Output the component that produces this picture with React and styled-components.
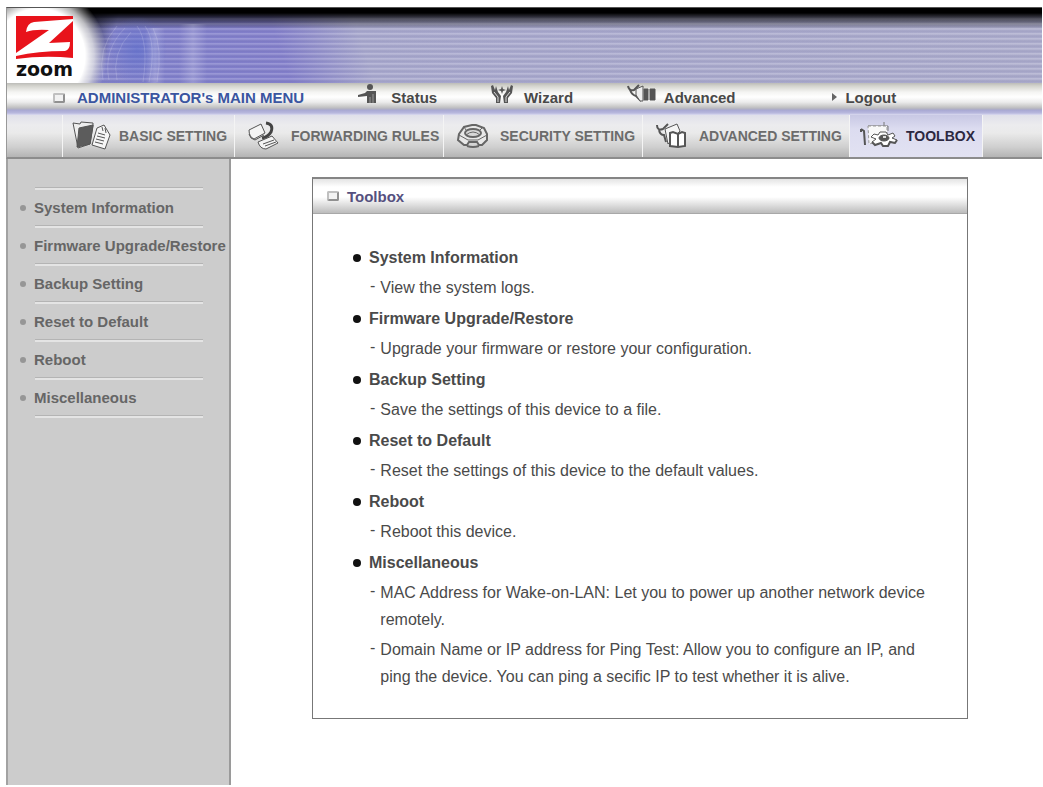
import React from 'react'
import styled, { createGlobalStyle } from 'styled-components'

const GlobalStyle = createGlobalStyle`
  * {
    box-sizing: border-box;
  }
  html, body, #root {
    height: 100%;
  }
  body {
    margin: 0;
    background: #fff;
    color: #4a4a4a;
    font-family: "Liberation Sans", Arial, sans-serif;
    font-size: 15px;
  }
  ul {
    list-style: none;
    margin: 0;
    padding: 0;
  }
  a {
    color: inherit;
    text-decoration: none;
  }
`

const Page = styled.div`
  display: flex;
  flex-direction: column;
  min-height: 100%;
  padding: 7px 1px 2px 6px;
`

/* banner */

const Banner = styled.header`
  display: flex;
  height: 76px;
  border-top: 1px solid #555;
  border-left: 1px solid #999;
  background:
    radial-gradient(ellipse 64px 66px at 32px 48px, #fff 0, #fff 72%, rgba(255, 255, 255, 0.7) 86%, rgba(255, 255, 255, 0.2) 100%, rgba(255, 255, 255, 0) 106%),
    linear-gradient(180deg, #000 0, #000 5px, rgba(0, 0, 0, 0.55) 11px, rgba(0, 0, 0, 0) 21px),
    linear-gradient(105deg, rgba(0, 0, 0, 0.8) 0, rgba(0, 0, 0, 0.7) 76px, rgba(0, 0, 0, 0) 110px),
    repeating-linear-gradient(180deg, rgba(255, 255, 255, 0.18) 0, rgba(255, 255, 255, 0.18) 1px, rgba(60, 60, 110, 0.1) 3px, rgba(255, 255, 255, 0) 5px),
    linear-gradient(72deg, #8686c4 0, #8080cc 120px, #8480cc 270px, #a9a9ce 350px, #adadcd 100%);
`

const Logo = styled.a`
  display: flex;
  flex-direction: column;
  width: 84px;
  padding: 8px 0 0 9px;
  color: #111;
`

const Wordmark = styled.span`
  font-family: "DejaVu Sans", Verdana, sans-serif;
  font-size: 19px;
  font-weight: bold;
  line-height: 20px;
`

/* menu bars */

const MainMenu = styled.nav`
  display: grid;
  grid-template-columns: 351fr 133fr 137fr 205fr 211fr;
  align-items: center;
  height: 32px;
  padding-bottom: 3px;
  border-left: 1px solid #999;
  background: linear-gradient(180deg, #bcbcb8 0, #d4d4ce 3px, #f4f4f2 9px, #fff 14px, #ececec 19px, #c6c6c6 24px, #b2b2c0 26px, #a8a8d2 27px, #b8b8de 30px, #dcdcf0 32px);
  color: #484848;
  font-weight: bold;
`

const MenuTitle = styled.div`
  display: flex;
  align-items: center;
  gap: 12px;
  padding-left: 46px;
  color: #3a55a0;
  white-space: nowrap;
`

const MenuLink = styled.a`
  display: flex;
  align-items: center;
  gap: ${({ $gap }) => $gap || 8}px;
  svg {
    margin-bottom: 7px;
  }
`

const SubMenu = styled.nav`
  display: grid;
  grid-template-columns: 172fr 209fr 199fr 207fr 134fr 59fr;
  height: 44px;
  padding-left: 55px;
  border-left: 1px solid #999;
  border-bottom: 2px solid #8c8c8c;
  background: linear-gradient(180deg, #e0e0ea 0, #ececee 10px, #eaeaea 18px, #cfcfcf 32px, #b4b4b4 42px);
`

const SubLink = styled.a`
  display: flex;
  align-items: center;
  gap: 8px;
  padding-left: 8px;
  border-left: 1px solid #f4f4f4;
  background: ${({ $active }) => ($active ? 'linear-gradient(180deg, #c8c8e4 0, #dcdcf0 14px, #e2e2f2 100%)' : 'none')};
  color: ${({ $active }) => ($active ? '#2c2840' : '#6c6c6c')};
  font-size: 14px;
  font-weight: bold;
  white-space: nowrap;
  &:last-child {
    border-right: 1px solid #f4f4f4;
  }
`

/* body */

const Body = styled.div`
  display: flex;
  flex: 1;
`

const Sidebar = styled.aside`
  flex: none;
  width: 225px;
  padding-top: 28px;
  border-left: 2px solid #a2a2a2;
  border-right: 2px solid #9a9a9a;
  background: #ccc;
`

const Divider = styled.hr`
  width: 168px;
  height: 3px;
  margin: 0 0 0 27px;
  border: 0;
  border-top: 1px solid #b4b4b4;
  background: #e4e4e4;
`

const SideLink = styled.a`
  display: flex;
  align-items: center;
  gap: 8px;
  height: 35px;
  padding-left: 12px;
  color: #666;
  font-weight: bold;
  white-space: nowrap;
  &::before {
    content: '';
    width: 6px;
    height: 6px;
    border-radius: 3px;
    background: #969696;
  }
`

const Main = styled.main`
  flex: 1;
  padding: 18px 74px 0 81px;
`

const Panel = styled.section`
  border: 1px solid #777;
  border-top: 2px solid #858585;
`

const PanelHeader = styled.header`
  display: flex;
  align-items: center;
  gap: 8px;
  height: 35px;
  padding-left: 14px;
  border-bottom: 1px solid #a8a8a8;
  background: linear-gradient(180deg, #e4e4e4 0, #fff 8px, #fff 18px, #dedede 26px, #bcbcbc 34px);
`

const PanelTitle = styled.h1`
  margin: 0;
  color: #55507e;
  font-size: 15px;
`

const Square = styled.span`
  width: 12px;
  height: 10px;
  border: 2px solid #c0c0c0;
  border-right-color: #909090;
  border-bottom-color: #909090;
  border-radius: 2px;
  background: #f2f2f2;
`

const Topics = styled.ul`
  display: flex;
  flex-direction: column;
  gap: 4px;
  padding: 30px 36px 28px 40px;
  font-size: 16px;
  line-height: 27px;
`

const TopicTitle = styled.h2`
  display: flex;
  align-items: center;
  gap: 8px;
  margin: 0 0 3px;
  font-size: 16px;
  line-height: 27px;
  &::before {
    content: '';
    width: 8px;
    height: 8px;
    border-radius: 4px;
    background: #111;
  }
`

const Notes = styled.ul`
  display: flex;
  flex-direction: column;
  gap: 3px;
`

const Note = styled.li`
  display: flex;
  gap: 5px;
  padding-left: 17px;
  &::before {
    content: '-';
    line-height: 23px;
  }
`

const ZoomMark = () => (
  <svg width="57" height="43" viewBox="0 0 57 43" aria-hidden="true">
    <path d="M0 0H57V42Q28 39 0 43Z" fill="#e8131b" />
    <path d="M10 16Q11 7 18 6L57 3V5L33 27L54 26Q54 34 49 35Q22 35 0 40V37L33 14Q18 13 10 16Z" fill="#fff" />
  </svg>
)

const StatusIcon = () => (
  <svg width="22" height="22" viewBox="0 0 22 22" aria-hidden="true">
    <circle cx="13" cy="4" r="3" fill="#555" />
    <path d="M10 8H19V20H10V13L1 14V12L8 10Z" fill="#555" />
    <path d="M13 14V20M16 11V20" stroke="#999" />
  </svg>
)

const WizardIcon = () => (
  <svg width="24" height="22" viewBox="0 0 24 22" aria-hidden="true">
    <path d="M1 3L3 2L5 7L6 3L8 9L11 13L10 20H6V15L2 10Z" fill="#555" />
    <path d="M23 3L21 2L19 7L18 3L16 9L13 13L14 20H18V15L22 10Z" fill="#555" />
    <path d="M4 9L8 14V19M20 9L16 14V19" fill="none" stroke="#ddd" />
    <path d="M12 3L13 6L16 7L13 8L12 11L11 8L8 7L11 6Z" fill="#555" />
  </svg>
)

const AdvancedIcon = () => (
  <svg width="29" height="22" viewBox="0 0 29 22" fill="none" stroke="#555" aria-hidden="true">
    <path d="M1 3Q2 8 7 7L12 2M3 7Q5 12 9 13L14 18" strokeWidth="2" />
    <path d="M9 6L16 3V18H13L9 12Z" fill="#eee" />
    <path d="M17 6H21V17H17ZM23 6H28V17H23Z" fill="#555" />
  </svg>
)

const FolderIcon = () => (
  <svg width="40" height="30" viewBox="0 0 40 30" fill="none" stroke="#555" aria-hidden="true">
    <path d="M2 2L9 3L10 1L22 2V5L19 23L7 27Z" fill="#eee" />
    <path d="M8 7L22 4L19 23L6 26Z" fill="#5c5c5c" />
    <path d="M26 7L33 4L39 14L34 28L21 24Z" fill="#f6f6f6" />
    <path d="M27 12L34 14M26 15L34 17M25 18L33 20M24 21L32 23M31 6L32 10M34 7L35 12" />
  </svg>
)

const ForwardIcon = () => (
  <svg width="40" height="30" viewBox="0 0 40 30" fill="none" stroke="#555" aria-hidden="true">
    <path d="M6 9L18 3L22 12L11 18Q6 16 6 9Z" fill="#f4f4f4" />
    <path d="M15 21L29 15L35 22L23 28Q17 28 15 21Z" fill="#f4f4f4" />
    <path d="M20 23L31 19M22 25L33 21M6 13Q7 18 12 19L21 14" />
    <path d="M23 2Q31 3 28 11Q25 16 19 17" strokeWidth="3" stroke="#444" />
  </svg>
)

const SecurityIcon = () => (
  <svg width="40" height="30" viewBox="0 0 40 30" fill="none" stroke="#666" aria-hidden="true">
    <path d="M7 13L12 6L20 4H24L32 7L35 13V19L30 24H27L25 21H17L15 24H12L6 19Z" fill="#e8e8e8" strokeWidth="2" />
    <ellipse cx="21" cy="12" rx="8" ry="4" fill="#d8d8d8" strokeWidth="2" />
    <path d="M14 14Q21 8 28 14M7 14L16 19H26L35 14M12 6L14 9M31 6L28 9" />
    <path d="M15 25Q21 27 27 25" strokeWidth="2" />
  </svg>
)

const BookIcon = () => (
  <svg width="40" height="30" viewBox="0 0 40 30" fill="none" stroke="#555" aria-hidden="true">
    <path d="M6 4Q6 10 12 8L17 3M8 9Q9 14 13 14L15 21" strokeWidth="2" />
    <path d="M14 8L26 3L29 10L17 23Z" fill="#f4f4f4" />
    <path d="M19 12L22 11L27 13L31 11L34 12V25L27 26L19 25Z" fill="#fff" strokeWidth="2" />
    <path d="M27 13V26" strokeWidth="2" />
  </svg>
)

const GearIcon = () => (
  <svg width="40" height="30" viewBox="0 0 40 30" fill="none" stroke="#555" aria-hidden="true">
    <path d="M10 5L26 5V1M26 5H30V10" stroke="#777" />
    <path d="M3 8L6 10L7 24M3 8V11" strokeWidth="2" />
    <path d="M10 5H29V14L24 20L11 23Z" fill="#f8f8f8" stroke="#999" strokeDasharray="3 2" />
    <path d="M16 13L20 14L22 11H28L30 14L35 12L37 15L34 17L39 19L37 22L32 21L30 25H25L23 22L17 24L14 21L18 18L13 16Z" fill="#fff" />
    <path d="M14 21L17 24L23 22L25 25H30L32 21L37 22L39 19" strokeWidth="2" />
    <ellipse cx="26" cy="17" rx="5" ry="3" fill="#555" />
    <path d="M25 15H28V17H25Z" fill="#ddd" stroke="none" />
  </svg>
)

const Arrow = () => (
  <svg width="8" height="22" viewBox="0 0 8 22" aria-hidden="true">
    <path d="M1 10L6 14L1 18Z" fill="#666" />
  </svg>
)

// faint ripples to the right of the logo
const Ripples = () => (
  <svg width="130" height="75" viewBox="0 0 130 75" fill="none" aria-hidden="true">
    <defs>
      <radialGradient id="pool">
        <stop offset="0" stopColor="#5a6ccc" stopOpacity="0.6" />
        <stop offset="1" stopColor="#5a6ccc" stopOpacity="0" />
      </radialGradient>
      <linearGradient id="band">
        <stop offset="0" stopColor="#fff" stopOpacity="0" />
        <stop offset="0.5" stopColor="#fff" stopOpacity="0.2" />
        <stop offset="1" stopColor="#fff" stopOpacity="0" />
      </linearGradient>
    </defs>
    <ellipse cx="46" cy="42" rx="30" ry="34" fill="url(#pool)" />
    <rect x="88" y="16" width="28" height="59" fill="url(#band)" />
    <rect x="54" y="20" width="20" height="55" fill="url(#band)" />
    <g stroke="#fff" opacity="0.16">
      <path d="M12 72Q6 40 26 18M18 72Q12 42 34 20M26 72Q20 46 40 24" />
      <path d="M46 18Q58 34 52 74M54 18Q66 34 58 74M62 20Q72 40 66 74" />
    </g>
  </svg>
)

const subMenu = [
  { label: 'BASIC SETTING', icon: <FolderIcon /> },
  { label: 'FORWARDING RULES', icon: <ForwardIcon /> },
  { label: 'SECURITY SETTING', icon: <SecurityIcon /> },
  { label: 'ADVANCED SETTING', icon: <BookIcon /> },
  { label: 'TOOLBOX', icon: <GearIcon />, active: true },
]

const topics = [
  { title: 'System Information', notes: ['View the system logs.'] },
  { title: 'Firmware Upgrade/Restore', notes: ['Upgrade your firmware or restore your configuration.'] },
  { title: 'Backup Setting', notes: ['Save the settings of this device to a file.'] },
  { title: 'Reset to Default', notes: ['Reset the settings of this device to the default values.'] },
  { title: 'Reboot', notes: ['Reboot this device.'] },
  {
    title: 'Miscellaneous',
    notes: [
      'MAC Address for Wake-on-LAN: Let you to power up another network device remotely.',
      'Domain Name or IP address for Ping Test: Allow you to configure an IP, and ping the device. You can ping a secific IP to test whether it is alive.',
    ],
  },
]

const App = () => (
  <Page>
    <GlobalStyle />
    <Banner>
      <Logo href="#home">
        <ZoomMark />
        <Wordmark>zoom</Wordmark>
      </Logo>
      <Ripples />
    </Banner>
    <MainMenu>
      <MenuTitle>
        <Square />
        ADMINISTRATOR's MAIN MENU
      </MenuTitle>
      <MenuLink href="#status" $gap={12}><StatusIcon />Status</MenuLink>
      <MenuLink href="#wizard" $gap={10}><WizardIcon />Wizard</MenuLink>
      <MenuLink href="#advanced"><AdvancedIcon />Advanced</MenuLink>
      <MenuLink href="#logout" $gap={6}><Arrow />Logout</MenuLink>
    </MainMenu>
    <SubMenu>
      {subMenu.map(({ label, icon, active }) => (
        <SubLink key={label} href={`#${label}`} $active={active}>
          {icon}
          {label}
        </SubLink>
      ))}
    </SubMenu>
    <Body>
      <Sidebar>
        <Divider />
        <ul>
          {topics.map(({ title }) => (
            <li key={title}>
              <SideLink href={`#${title}`}>{title}</SideLink>
              <Divider />
            </li>
          ))}
        </ul>
      </Sidebar>
      <Main>
        <Panel>
          <PanelHeader>
            <Square />
            <PanelTitle>Toolbox</PanelTitle>
          </PanelHeader>
          <Topics>
            {topics.map(({ title, notes }) => (
              <li key={title}>
                <TopicTitle>{title}</TopicTitle>
                <Notes>
                  {notes.map((note) => (
                    <Note key={note}>{note}</Note>
                  ))}
                </Notes>
              </li>
            ))}
          </Topics>
        </Panel>
      </Main>
    </Body>
  </Page>
)

export default App
